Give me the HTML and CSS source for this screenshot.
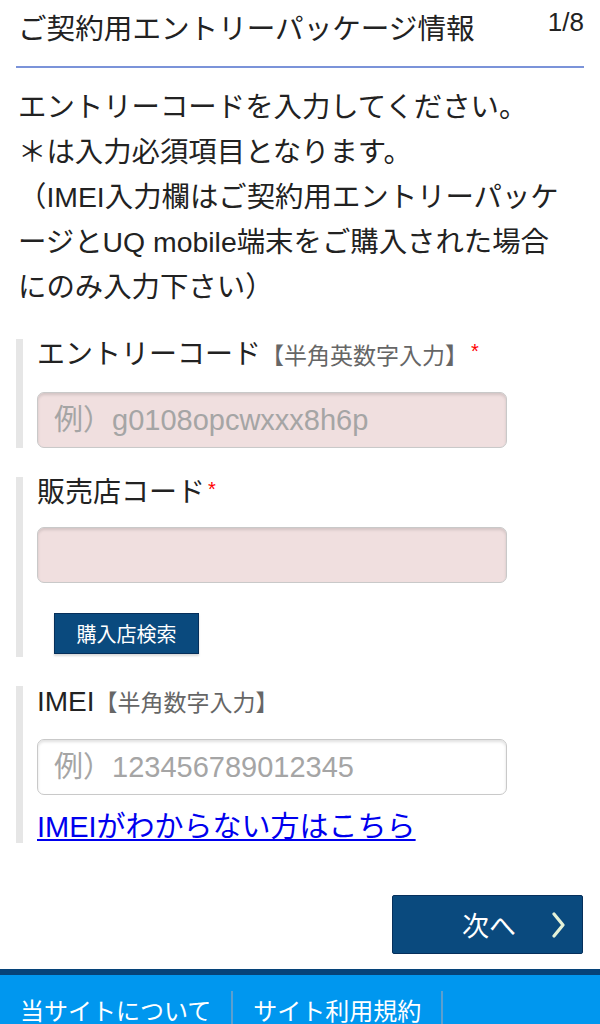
FILE: index.html
```html
<!DOCTYPE html>
<html lang="ja">
<head>
  <meta charset="UTF-8">
  <meta name="viewport" content="width=device-width, initial-scale=1.0">
  <title>ご契約用エントリーパッケージ情報</title>
  <link rel="stylesheet" href="styles.css">
</head>
<body>
  <div class="header">
    <h1 class="title">ご契約用エントリーパッケージ情報</h1>
    <span class="step">1/8</span>
  </div>

  <p class="intro">
    エントリーコードを入力してください。<br>
    ＊は入力必須項目となります。<br>
    （IMEI入力欄はご契約用エントリーパッケ<br>
    ージとUQ mobile端末をご購入された場合<br>
    にのみ入力下さい）
  </p>

  <div class="field">
    <label class="label">エントリーコード<span class="note">【半角英数字入力】</span><span class="req">*</span></label>
    <input class="input required" type="text" placeholder="例）g0108opcwxxx8h6p">
  </div>

  <div class="field field-shop">
    <label class="label">販売店コード<span class="req">*</span></label>
    <input class="input required shop-input" type="text">
    <button class="search-btn" type="button">購入店検索</button>
  </div>

  <div class="field">
    <label class="label">IMEI<span class="note">【半角数字入力】</span></label>
    <input class="input" type="text" placeholder="例）123456789012345">
    <a class="help-link" href="#">IMEIがわからない方はこちら</a>
  </div>

  <div class="actions">
    <button class="next-btn" type="button">
      <span>次へ</span>
      <svg class="chevron" width="14" height="26" viewBox="0 0 14 26">
        <polyline points="2,2 11,13 2,24" fill="none" stroke="#e4f2d8" stroke-width="3.2" stroke-linecap="round" stroke-linejoin="round"/>
      </svg>
    </button>
  </div>

  <div class="footer">
    <a class="footer-link" href="#">当サイトについて</a>
    <a class="footer-link" href="#">サイト利用規約</a>
  </div>
</body>
</html>
```

FILE: styles.css
```css
* {
  margin: 0;
  padding: 0;
  box-sizing: border-box;
}

body {
  font-family: "Liberation Sans", "Noto Sans CJK JP", sans-serif;
  color: #222;
  background: white;
}

.header {
  display: flex;
  justify-content: space-between;
  align-items: flex-start;
  height: 68px;
  margin: 0 16px;
  padding-top: 6px;
  border-bottom: 2px solid #7b93d9;
}

.title {
  font-size: 28.6px;
  font-weight: normal;
  line-height: 42px;
  padding: 2px 0 0 2px;
  color: #222;
}

.step {
  font-size: 26px;
  line-height: 32px;
  color: #222;
}

.intro {
  font-size: 28.4px;
  line-height: 45px;
  margin: 17px 16px 0;
  padding-left: 2px;
}

.field {
  display: flex;
  flex-direction: column;
  align-items: flex-start;
  margin: 29px 0 0 16px;
  padding-left: 14px;
  border-left: 7px solid #e6e6e6;
}

.intro + .field {
  margin-top: 29px;
}

.label {
  font-size: 28px;
  line-height: 32px;
  color: #222;
}

.note {
  font-size: 23px;
  line-height: 1;
  color: #666;
}

.req {
  font-size: 20px;
  line-height: 1;
  color: #f00;
  vertical-align: 6px;
  margin-left: 3px;
}

.input {
  width: 470px;
  height: 56px;
  margin-top: 21px;
  padding: 0 16px;
  font-family: inherit;
  font-size: 29px;
  color: #333;
  background: white;
  border: 1px solid #c9c9c9;
  border-radius: 7px;
  box-shadow: inset 0 2px 3px rgba(0, 0, 0, 0.12);
}

.input.required {
  background: #f0dfdf;
}

.input::placeholder {
  color: #a5a5a5;
}

.shop-input {
  margin-top: 18px;
}

.field-shop {
  padding-bottom: 3px;
}

.search-btn {
  margin: 30px 0 0 17px;
  height: 41px;
  width: 145px;
  font-family: inherit;
  font-size: 20px;
  color: white;
  background: #0a4a7e;
  border: 1px solid #062f5a;
  box-shadow: 0 2px 2px rgba(0, 0, 0, 0.15);
}

.help-link {
  margin-top: 16px;
  font-size: 29px;
  line-height: 32px;
  color: #0000ee;
}

.actions {
  display: flex;
  justify-content: flex-end;
  margin: 52px 17px 0 0;
}

.next-btn {
  display: flex;
  align-items: center;
  justify-content: flex-end;
  gap: 36px;
  width: 191px;
  height: 59px;
  padding-right: 16px;
  font-family: inherit;
  font-size: 27px;
  color: white;
  background: #0a4a7e;
  border: 1px solid #06305c;
  border-radius: 2px;
}

.footer {
  display: flex;
  margin-top: 15px;
  height: 56px;
  background: #0097ef;
  border-top: 6px solid #064379;
}

.footer-link {
  margin-top: 16px;
  padding: 4px 20px 0;
  font-size: 24px;
  line-height: 34px;
  color: white;
  text-decoration: none;
  border-right: 2px solid #5c9fcf;
}
```
